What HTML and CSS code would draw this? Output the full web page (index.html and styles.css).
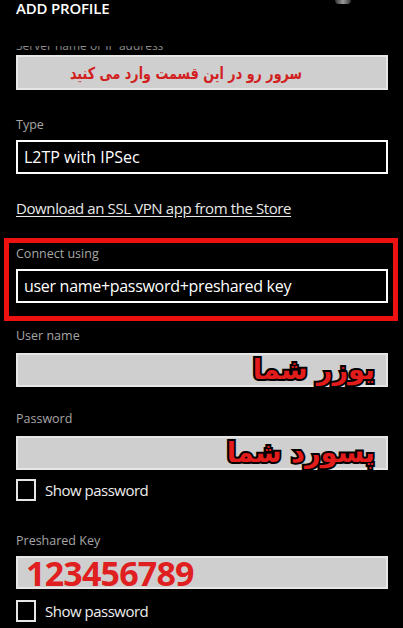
FILE: index.html
```html
<!DOCTYPE html>
<html lang="en">
<head>
  <meta charset="UTF-8" />
  <title>Add profile</title>
  <link rel="stylesheet" href="styles.css">
</head>
<body>
  <div class="page">
    <div class="header">
      <h1 class="title">ADD PROFILE</h1>
      <span class="spinner"></span>
    </div>

    <div class="cut-label"><span>Server name or IP address</span></div>
    <div class="field field-grey field-server">
      <span class="note" dir="rtl">سرور رو در این قسمت وارد می کنید</span>
    </div>

    <div class="label label-type">Type</div>
    <div class="field field-dark">L2TP with IPSec</div>

    <a href="#" class="store-link">Download an SSL VPN app from the Store</a>

    <div class="highlight">
      <div class="label">Connect using</div>
      <div class="field field-dark field-connect">user name+password+preshared key</div>
    </div>

    <div class="label label-user">User name</div>
    <div class="field field-grey field-big">
      <span class="big-note" dir="rtl">یوزر شما</span>
    </div>

    <div class="label label-pass">Password</div>
    <div class="field field-grey field-big">
      <span class="big-note" dir="rtl">پسورد شما</span>
    </div>
    <label class="check">
      <span class="box"></span>
      Show password
    </label>

    <div class="label label-key">Preshared Key</div>
    <div class="field field-grey field-key">123456789</div>
    <label class="check check-last">
      <span class="box"></span>
      Show password
    </label>
  </div>
</body>
</html>
```

FILE: styles.css
```css
html, body {
  margin: 0;
  padding: 0;
  background: #000;
}

body {
  font-family: "Open Sans", "Noto Sans", sans-serif;
  color: #fff;
  overflow: hidden;
}

.page {
  padding: 0 15px 0 16px;
  height: 628px;
}

.header {
  display: flex;
  justify-content: space-between;
  align-items: flex-start;
  height: 16px;
}

.title {
  margin: 0;
  font-size: 15px;
  font-weight: 600;
  line-height: 16px;
  letter-spacing: -0.2px;
}

.spinner {
  width: 16px;
  height: 4px;
  margin-right: 37px;
  border-radius: 0 0 8px 8px;
  background: linear-gradient(90deg, #333, #999 50%, #333);
}

.cut-label {
  margin-top: 30px;
  height: 8px;
  overflow: hidden;
  color: #8a8a8a;
  font-size: 12px;
  line-height: 16px;
}

.cut-label span {
  display: block;
  margin-top: -8px;
}

.label {
  color: #a6a6a6;
  font-size: 12.5px;
  line-height: 16px;
  height: 16px;
  margin-bottom: 7px;
}

.field {
  box-sizing: border-box;
  height: 34px;
  border: 2px solid #fff;
  font-size: 16px;
  line-height: 30px;
  padding: 0 6px;
  white-space: nowrap;
}

.field-dark {
  background: #000;
  color: #fff;
}

.field-connect {
  letter-spacing: -0.3px;
}

.field-grey {
  background: #cfcfcf;
  border-color: #e6e6e6;
}

.field-server {
  height: 35px;
  margin-top: 1px;
  text-align: right;
  padding-right: 84px;
}

.note {
  display: inline-block;
  font-family: "DejaVu Sans", sans-serif;
  font-weight: bold;
  font-size: 15px;
  color: #d21f1f;
  line-height: 30px;
  transform: scale(0.85, 1.1);
  transform-origin: right center;
}

.label-type {
  margin-top: 27px;
}

.store-link {
  display: block;
  margin-top: 23px;
  color: #e8e8e8;
  font-size: 15px;
  line-height: 22px;
  letter-spacing: -0.4px;
  text-decoration: underline;
  text-underline-offset: 2px;
}

.highlight {
  margin: 19px -10px 0 -12px;
  border: 5px solid #ee1111;
  padding: 3px 5px 13px 7px;
}

.label-user {
  margin-top: 7px;
  margin-bottom: 9px;
}

.field-big {
  text-align: right;
  padding-right: 11px;
  overflow: visible;
}

.big-note {
  font-family: "DejaVu Sans", sans-serif;
  font-weight: bold;
  font-size: 27px;
  line-height: 30px;
  color: #e21b1b;
  -webkit-text-stroke: 4px #000;
  paint-order: stroke fill;
}

.label-pass {
  margin-top: 24px;
  margin-bottom: 9px;
}

.check {
  display: flex;
  align-items: center;
  gap: 9px;
  margin-top: 9px;
  height: 22px;
  font-size: 15px;
  letter-spacing: -0.5px;
  color: #eee;
}

.check-last {
  margin-top: 11px;
}

.box {
  box-sizing: border-box;
  width: 20px;
  height: 22px;
  border: 2px solid #e6e6e6;
}

.label-key {
  margin-top: 32px;
}

.field-key {
  font-family: "Open Sans", sans-serif;
  font-weight: bold;
  font-size: 34px;
  line-height: 30px;
  color: #e02020;
  padding-left: 8px;
  letter-spacing: -0.8px;
  height: 33px;
}
```
